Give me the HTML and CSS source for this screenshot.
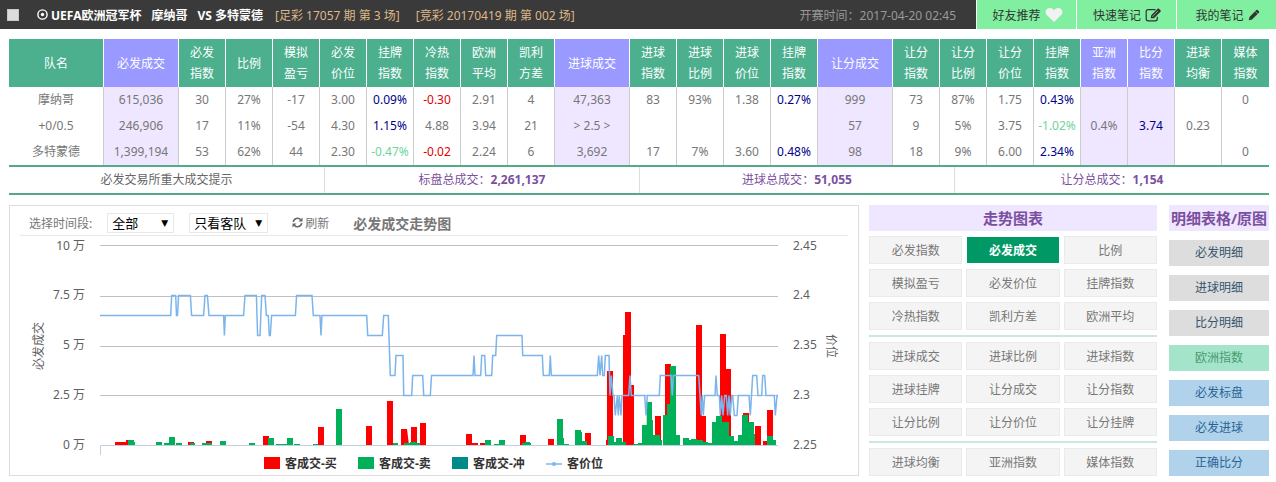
FILE: index.html
```html
<!DOCTYPE html>
<html lang="zh-CN">
<head>
    <meta charset="UTF-8">
    <meta name="viewport" content="width=device-width, initial-scale=1.0">
    <title>必发成交走势图</title>
    <link rel="stylesheet" href="styles.css">
</head>
<body>
    <div class="topbar">
        <label class="match">
            <input type="checkbox" class="match-check">
            <svg class="icon-ball" width="11" height="11" viewBox="0 0 11 11"><circle cx="5.5" cy="5.5" r="4.6" fill="none" stroke="#fff" stroke-width="1.4"/><circle cx="5.5" cy="5.5" r="1.7" fill="#fff"/></svg>
            <span class="league">UEFA欧洲冠军杯</span>
            <span class="team">摩纳哥</span>
            <span class="team">VS 多特蒙德</span>
        </label>
        <span class="issue">[足彩 17057 期 第 3 场]</span>
        <span class="issue">[竞彩 20170419 期 第 002 场]</span>
        <span class="start-time">开赛时间<span class="colon">：</span>2017-04-20 02:45</span>
        <div class="top-btns">
            <button>好友推荐<svg class="icon-heart" width="18" height="16" viewBox="0 0 18 16"><path d="M9 15 1.8 8C-.8 5 1 1 4.700 1 6.800 1 8.200 2.200 9 3.400 9.800 2.200 11.200 1 13.300 1 17 1 18.800 5 16.200 8z" fill="#f2f2f2"/></svg></button>
            <button>快速笔记<svg width="17" height="14" viewBox="0 0 17 14"><path d="M10.500 1.700H3.200Q1.200 1.700 1.200 3.700V10.800Q1.200 12.800 3.200 12.800H10.300Q12.300 12.800 12.300 10.800V8.800" fill="none" stroke="#333" stroke-width="1.200"/><path d="M5.700 10.300 6.200 7.200 12.600.8Q13.300.2 14 .8L15.500 2.300Q16.200 3 15.500 3.700L8.900 10.200z" fill="#333"/><path d="M7.200 8.700 13 2.900" stroke="#80f0a0" stroke-width=".7"/></svg></button>
            <button>我的笔记<svg width="12" height="12" viewBox="0 0 12 12"><path d="M.8 11.200 1.500 8 8.300 1.100Q9 .5 9.700 1.100L10.900 2.300Q11.500 3 10.900 3.700L4 10.500z" fill="#333"/><path d="M7.300 2.500 9.600 4.800" stroke="#80f0a0" stroke-width=".7"/></svg></button>
        </div>
    </div>

    <table class="odds">
        <colgroup>
            <col>
            <col class="c-wide">
            <col class="c-num" span="8">
            <col class="c-wide">
            <col class="c-num" span="4">
            <col class="c-wide">
            <col class="c-num" span="8">
        </colgroup>
        <thead>
            <tr>
                <th>队名</th><th class="hl">必发成交</th><th>必发<br>指数</th><th>比例</th><th>模拟<br>盈亏</th><th>必发<br>价位</th><th>挂牌<br>指数</th><th>冷热<br>指数</th><th>欧洲<br>平均</th><th>凯利<br>方差</th>
                <th class="hl">进球成交</th><th>进球<br>指数</th><th>进球<br>比例</th><th>进球<br>价位</th><th>挂牌<br>指数</th>
                <th class="hl">让分成交</th><th>让分<br>指数</th><th>让分<br>比例</th><th>让分<br>价位</th><th>挂牌<br>指数</th>
                <th class="hl">亚洲<br>指数</th><th class="hl">比分<br>指数</th><th>进球<br>均衡</th><th>媒体<br>指数</th>
            </tr>
        </thead>
        <tbody>
            <tr>
                <td>摩纳哥</td><td class="hl">615,036</td><td>30</td><td>27%</td><td>-17</td><td>3.00</td><td class="blue">0.09%</td><td class="red">-0.30</td><td>2.91</td><td>4</td>
                <td class="hl">47,363</td><td>83</td><td>93%</td><td>1.38</td><td class="blue">0.27%</td>
                <td class="hl">999</td><td>73</td><td>87%</td><td>1.75</td><td class="blue">0.43%</td>
                <td class="hl"></td><td class="hl"></td><td></td><td>0</td>
            </tr>
            <tr>
                <td>+0/0.5</td><td class="hl">246,906</td><td>17</td><td>11%</td><td>-54</td><td>4.30</td><td class="blue">1.15%</td><td>4.88</td><td>3.94</td><td>21</td>
                <td class="hl">&gt; 2.5 &gt;</td><td></td><td></td><td></td><td></td>
                <td class="hl">57</td><td>9</td><td>5%</td><td>3.75</td><td class="green">-1.02%</td>
                <td class="hl">0.4%</td><td class="hl blue">3.74</td><td>0.23</td><td></td>
            </tr>
            <tr>
                <td>多特蒙德</td><td class="hl">1,399,194</td><td>53</td><td>62%</td><td>44</td><td>2.30</td><td class="green">-0.47%</td><td class="red">-0.02</td><td>2.24</td><td>6</td>
                <td class="hl">3,692</td><td>17</td><td>7%</td><td>3.60</td><td class="blue">0.48%</td>
                <td class="hl">98</td><td>18</td><td>9%</td><td>6.00</td><td class="blue">2.34%</td>
                <td class="hl"></td><td class="hl"></td><td></td><td>0</td>
            </tr>
        </tbody>
    </table>
    <div class="totals">
        <div class="tip">必发交易所重大成交提示</div>
        <div>标盘总成交<span class="colon">：</span><b>2,261,137</b></div>
        <div>进球总成交<span class="colon">：</span><b>51,055</b></div>
        <div>让分总成交<span class="colon">：</span><b>1,154</b></div>
    </div>

    <div class="main">
        <div class="chart-box">
            <div class="chart-bar">
                <label for="period">选择时间段:</label>
                <span class="select select-period"><select id="period"><option>全部</option></select></span>
                <span class="select select-side"><select aria-label="球队"><option>只看客队</option></select></span>
                <button class="refresh"><svg width="11" height="11" viewBox="0 0 11 11"><path d="M1.300 4.800A4.200 4.200 0 0 1 8.700 2.800M9.700 6.200A4.200 4.200 0 0 1 2.300 8.200" fill="none" stroke="#666" stroke-width="1.600"/><path d="M10.500.6V4.600H6.500zM.5 10.400V6.400H4.500z" fill="#666"/></svg>刷新</button>
                <h3>必发成交走势图</h3>
            </div>
            <svg class="chart" viewBox="10 236 848 239">
                <!-- 网格线 -->
                <path class="grid" d="M100 245.500H778M100 296.500H778M100 346.500H778M100 395.500H778"/>
                <path class="axis" d="M778 445.500H100.500V455"/>
                <!-- 买 -->
                <path fill="#f00" d="M115 445V442H126V440H130V445zM188 445V442H194V445zM206 445V441H212V445zM263 445V436H269V445zM318 445V427H324V445zM366 445V426H372V445zM387 445V401H393V445zM401 445V429H407L409 445zM411 445V427H417V445zM420 445V423H426V445zM466 445V434H472V443H478V445zM480 445V443H486V445zM520 445V435H526V445zM548 445V439H554V445zM585 445V433H591V445zM606 445V440H607V371H613V445zM623 445V335H625V312H631V385H634V445zM655 445V416H661V445zM665 445V364H671V445zM696 445V325H702V416H706V445zM720 445V334H726V369H731V445zM743 445V413H749V445zM755 445V426H761V445zM763 445V441H767V410H773V445z"/>
                <!-- 卖 -->
                <path fill="#00b159" d="M128 445V440H134V442H135V445zM156 445V442H162V445zM164 445V443H169V437H175V445zM176 445V443H182V445zM190 445V443H195V445zM202 445V443H212V445zM220 445V441H226V445zM249 445V443H255V445zM268 445V438H274V445zM276 445V444H287V438H293V445zM294 445V444H300V445zM313 445V444H318V445zM336 445V409H342V445zM393 445V443H398V445zM404 445V443H410V442H416V443H420V445zM485 445V440H491V445zM494 445V444H499V440H505V445zM522 445V443H525V442H530V443H531V445zM557 445V419H563V438H564V444H569V445zM575 445V430H581V432H582V441H587V445zM608 445V436H614V442H616V438H622V442H626V445zM633 445V444H638V443H642V425H646.700V402H652V420H653V435H660V440H662V445zM663 445V415H667V404H670V366H676V435H680V445zM683 445V438H689V440H691V439H697V440H703V442H708V443H712V422H716V416H722V422H729V436H734V441H738V435H742V415H748V422H754V434H755V445zM767 445V436H773V440H776V445z"/>
                <!-- 价位 -->
                <path class="price" d="M100 315.500H170.700L171.700 295.500H175.700L176.500 315.500H177.500L178.600 295.500H190.400L191.600 315.500H203.600L205 295.500H207.400L209 315.500H223.600L224.400 335.500 225.300 315.500H243.600L245 295.500H256.400L257.600 335.500H260L261.700 295.500H265L266.400 315.500H268.300L269.300 335.500H270.300L271.600 315.500H295.400L296.600 295.500H312L313.300 315.500H320L321 335.500 322 315.500H366.700L367.700 335.500H382.300L383.700 315.500H388.300L390.300 375.500H395L396 355.500H403L403.700 395.500H411.700L412.700 375.500H422.700L423.700 395.500H430.300L431.500 375.500H473L474 355.500 475 375.500H480.700L481.700 355.500H484.700L485.700 375.500H491.700L492.700 355.500H495.700L496.700 335.500H522L522.700 355.500H542.300L543.300 375.500H549.300L550.300 355.500 551.300 375.500H597.300L598.700 355.500 600 375.500 601.700 355.500 602.700 375.500H604.300L605.300 355.500H609L610 395.500 611.300 375.500 613 395.500H614L615.300 415.500 617.300 395.500 618.300 415.500 619.300 395.500 621 415.500 622 395.500H628.700L630 375.500 631.300 395.500H644.700L646 415.500 647.300 395.500H659.300L660.300 375.500H671L672.300 395.500 673.300 375.500H698.700L700 395.500 701.300 415.500 702.300 395.500 703.300 415.500 704.700 395.500H715L716 375.500 717.300 395.500H719.300L720.300 415.500 721.700 395.500 723 415.500 724.700 395.500H726.300L727.700 415.500 729 395.500 730.300 415.500 731.700 395.500H732.700L734.300 415.500H737L738.300 395.500H749L750.300 415.500 752.700 375.500H756.700L758 395.500H761.700L762.700 375.500H764.700L766 395.500H774.300L775.300 415.500 777 395.500H778"/>
                <g class="label" text-anchor="end">
                    <text x="85" y="250">10 万</text>
                    <text x="85" y="299">7.5 万</text>
                    <text x="85" y="349">5 万</text>
                    <text x="85" y="399">2.5 万</text>
                    <text x="85" y="449">0 万</text>
                </g>
                <g class="label">
                    <text x="793" y="250">2.45</text>
                    <text x="793" y="299">2.4</text>
                    <text x="793" y="349">2.35</text>
                    <text x="793" y="399">2.3</text>
                    <text x="793" y="449">2.25</text>
                </g>
                <g class="label" text-anchor="middle">
                    <text transform="translate(43 346) rotate(-90)">必发成交</text>
                    <text transform="translate(827 346) rotate(90)">价位</text>
                </g>
                <g class="legend">
                    <path fill="#f00" d="M264 457h16v12h-16z"/>
                    <path fill="#00b159" d="M358 457h16v12h-16z"/>
                    <path fill="#008b8b" d="M452 457h16v12h-16z"/>
                    <path class="price" d="M546 464h16"/>
                    <circle cx="554" cy="464" r="2" fill="#7cb5ec"/>
                    <text x="285" y="468">客成交-买</text>
                    <text x="379" y="468">客成交-卖</text>
                    <text x="473" y="468">客成交-冲</text>
                    <text x="567" y="468">客价位</text>
                </g>
            </svg>
        </div>

        <div class="trend">
            <h2>走势图表</h2>
            <div class="trend-group">
                <button>必发指数</button><button class="active">必发成交</button><button>比例</button>
                <button>模拟盈亏</button><button>必发价位</button><button>挂牌指数</button>
                <button>冷热指数</button><button>凯利方差</button><button>欧洲平均</button>
            </div>
            <div class="trend-group">
                <button>进球成交</button><button>进球比例</button><button>进球指数</button>
                <button>进球挂牌</button><button>让分成交</button><button>让分指数</button>
                <button>让分比例</button><button>让分价位</button><button>让分挂牌</button>
            </div>
            <div class="trend-group">
                <button>进球均衡</button><button>亚洲指数</button><button>媒体指数</button>
            </div>
        </div>

        <div class="detail">
            <h2>明细表格/原图</h2>
            <a href="#" class="gray">必发明细</a>
            <a href="#" class="gray">进球明细</a>
            <a href="#" class="gray">比分明细</a>
            <a href="#" class="mint">欧洲指数</a>
            <a href="#" class="sky">必发标盘</a>
            <a href="#" class="sky">必发进球</a>
            <a href="#" class="sky">正确比分</a>
        </div>
    </div>
</body>
</html>
```
FILE: styles.css
```css
* {
    box-sizing: border-box;
}
body {
    margin: 0;
    font-family: "Noto Sans", "Noto Sans CJK SC", sans-serif;
    font-size: 12px;
    color: #777;
    background-color: #fff;
}
button {
    font: inherit;
    color: inherit;
    border: none;
    padding: 0;
    cursor: pointer;
}
/* 冒号居中 */
.colon {
    font-family: "Noto Sans CJK TC", sans-serif;
    line-height: 1;
}

/* 顶部 */
.topbar {
    display: flex;
    align-items: center;
    height: 29px;
    background-color: #3a3a3a;
    white-space: nowrap;
}
.match {
    display: flex;
    align-items: center;
    color: #fff;
    font-weight: bold;
}
.match-check {
    appearance: none;
    width: 12px;
    height: 12px;
    margin: 0 18px 0 7px;
    background-color: #ddd;
    border: 1px solid #c8c8c8;
}
.icon-ball {
    margin-right: 3px;
}
.team {
    margin-left: 10px;
}
.issue {
    margin-left: 12px;
    color: #deb887;
}
.issue + .issue {
    margin-left: 16px;
}
.start-time {
    margin-left: auto;
    margin-right: 20px;
    color: #999;
}
.top-btns {
    display: flex;
    height: 100%;
}
.top-btns button {
    display: flex;
    align-items: center;
    justify-content: center;
    gap: 4px;
    width: 100px;
    padding-left: 2px;
    background-color: #80f0a0;
    border-left: 1px solid #fff;
    color: #333;
}

/* 数据表 */
.odds {
    width: calc(100% - 16px);
    margin: 10px 7px 0 9px;
    border-collapse: separate;
    border-spacing: 0;
    table-layout: fixed;
    border-bottom: 2px solid #55a888;
    text-align: center;
}
.c-wide {
    width: 75px;
}
.c-num {
    width: 47px;
}
.odds th {
    height: 48px;
    padding: 0;
    font-weight: normal;
    line-height: 21px;
    color: #fff;
    background-color: #4caf8e;
    border-right: 1px solid #fff;
}
.odds th.hl {
    background-color: #99f;
}
.odds td {
    height: 26px;
    padding: 0;
    line-height: 20px;
    border-right: 1px solid #ccc;
}
.odds td.hl {
    background-color: #efe6ff;
}
.odds th:last-child,
.odds td:last-child {
    border-right: none;
}
.odds .blue {
    color: #00008b;
}
.odds .red {
    color: #e00000;
}
.odds .green {
    color: #6fd3a0;
}
.totals {
    display: grid;
    grid-template-columns: repeat(4, 1fr);
    margin: 0 7px 0 9px;
    border-bottom: 2px solid #55a888;
    line-height: 26px;
    text-align: center;
    color: #7b4fa0;
}
.totals div + div {
    border-left: 1px solid #ddd;
}
.totals .tip {
    color: #666;
}

/* 走势图 */
.main {
    display: flex;
    margin: 10px 7px 0 9px;
}
.chart-box {
    flex: 1;
    min-width: 0;
    border: 1px solid #ddd;
}
.chart-bar {
    display: flex;
    align-items: center;
    height: 30px;
    margin: 0 10px;
    padding: 4px 0 0 9px;
    border-bottom: 1px solid #e8e8e8;
}
.select {
    position: relative;
    margin-left: 15px;
}
.select::after {
    content: "▼";
    position: absolute;
    right: 6px;
    top: 4px;
    font: 9px/12px "DejaVu Sans", sans-serif;
    color: #000;
    pointer-events: none;
}
.select select {
    appearance: none;
    display: block;
    width: 100%;
    height: 20px;
    padding: 0 4px;
    border: 1px solid #e8e8e8;
    background-color: #fff;
    color: #000;
    font-family: inherit;
    font-size: 13px;
}
.select-period {
    width: 67px;
}
.select-side {
    width: 79px;
}
.refresh {
    display: flex;
    align-items: center;
    gap: 2px;
    margin-left: 24px;
    background: none;
}
.chart-bar h3 {
    margin: 0 0 0 24px;
    font-size: 14px;
}
.chart {
    display: block;
    width: 100%;
}
.grid {
    fill: none;
    stroke: #c0c0c0;
}
.axis {
    fill: none;
    stroke: #c0d0e0;
}
.price {
    fill: none;
    stroke: #7cb5ec;
    stroke-width: 1.5;
}
.label {
    font-size: 12px;
    fill: #606060;
}
.legend {
    font-size: 12px;
    font-weight: bold;
    fill: #333;
}

/* 右侧 */
.trend {
    width: 288px;
    margin-left: 10px;
}
.trend h2,
.detail h2 {
    margin: 0;
    font-size: 15px;
    line-height: 26px;
    text-align: center;
    white-space: nowrap;
    color: #7b4fa0;
    background-color: #efe6ff;
}
.trend-group {
    display: grid;
    grid-template-columns: repeat(3, 1fr);
    gap: 5px 4px;
    padding: 5px 0;
    border-bottom: 2px solid #cbe8da;
}
.trend-group:last-child {
    border-bottom: none;
    padding-bottom: 0;
}
.trend-group button {
    height: 28px;
    background-color: #f4f4f4;
    border: 1px solid #eaeaea;
}
.trend-group .active {
    background-color: #009966;
    border-color: #fff;
    color: #fff;
    font-weight: bold;
}
.detail {
    display: flex;
    flex-direction: column;
    gap: 9px;
    width: 100px;
    margin-left: 12px;
}
.detail a {
    line-height: 26px;
    text-align: center;
    text-decoration: none;
}
.detail .gray {
    background-color: #ddd;
    color: #34566e;
}
.detail .mint {
    background-color: #a3e4cb;
    color: #4a9a70;
}
.detail .sky {
    background-color: #b0d2ea;
    color: #2a6496;
}
```
